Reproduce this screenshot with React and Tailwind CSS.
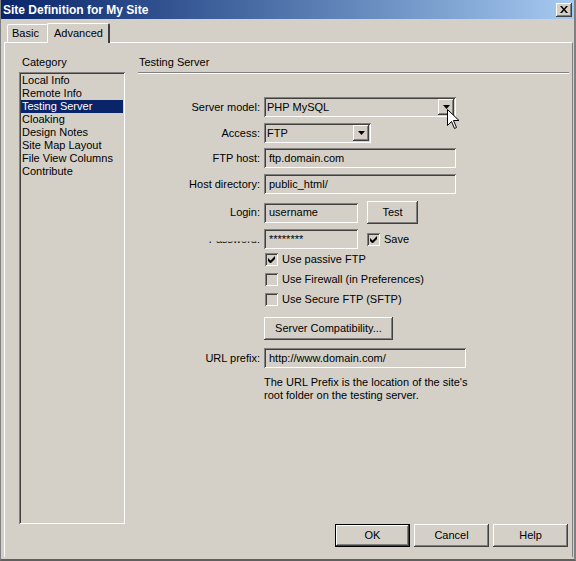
const raised = "shadow-[inset_-1px_-1px_0_#404040,inset_1px_1px_0_#ffffff,inset_-2px_-2px_0_#808080]";
const raisedDefault = "shadow-[inset_0_0_0_1px_#000000,inset_-2px_-2px_0_#404040,inset_2px_2px_0_#ffffff,inset_-3px_-3px_0_#808080]";
const sunken = "shadow-[inset_1px_1px_0_#808080,inset_-1px_-1px_0_#ffffff,inset_2px_2px_0_#404040,inset_-2px_-2px_0_#d4d0c8]";

function Arrow() {
  return (
    <svg width="7" height="4" viewBox="0 0 7 4">
      <path d="M0 0h7L3.5 4z" fill="#000" />
    </svg>
  );
}

function Select({ value, width }) {
  return (
    <div className={`h-[20px] ${width} ${sunken} flex items-center pl-[3px] pr-[2px]`}>
      <span className="flex-1">{value}</span>
      <div className={`w-[16px] h-[16px] ${raised} bg-[#d4d0c8] flex items-center justify-center`}>
        <Arrow />
      </div>
    </div>
  );
}

function Field({ value, width }) {
  return (
    <div className={`h-[20px] ${width} ${sunken} flex items-center pl-[5px]`}>{value}</div>
  );
}

function Check({ checked }) {
  return (
    <div className={`w-[13px] h-[13px] ${sunken} flex items-center justify-center`}>
      {checked && (
        <svg width="7" height="7" viewBox="0 0 7 7">
          <path d="M0 2v3l2 2h1l4-4V0L2.5 4.5z" fill="#000" />
        </svg>
      )}
    </div>
  );
}

function Button({ children, className = "", bevel = raised }) {
  return (
    <div className={`h-[23px] ${bevel} bg-[#d4d0c8] flex items-center justify-center ${className}`}>
      {children}
    </div>
  );
}

function Label({ children }) {
  return <div className="h-[20px] flex items-center justify-end">{children}</div>;
}

const categories = ["Local Info", "Remote Info", "Testing Server", "Cloaking", "Design Notes", "Site Map Layout", "File View Columns", "Contribute"];

export default function App() {
  return (
    <div
      className="relative w-[576px] h-[561px] bg-[#d4d0c8] text-[11px] text-black border-l border-r-2 border-b-2 border-l-[#808080] border-r-[#808080] border-b-[#606060] flex flex-col"
      style={{ fontFamily: '"Liberation Sans", Arial, sans-serif' }}
    >
      {/* title bar */}
      <div className="h-[19px] flex items-center pl-[2px] pr-[2px] bg-gradient-to-r from-[#0a246a] to-[#a6caf0]">
        <span className="flex-1 text-white font-bold text-[12px]">Site Definition for My Site</span>
        <div className={`w-[16px] h-[14px] ${raised} bg-[#d4d0c8] flex items-center justify-center`}>
          <svg width="8" height="7" viewBox="0 0 8 7">
            <path d="M0 0h2l2 2.5L6 0h2L5 3.5 8 7H6L4 4.5 2 7H0l3-3.5z" fill="#000" />
          </svg>
        </div>
      </div>

      {/* tabs */}
      <div className="flex items-end h-[23px] pl-[6px]">
        <div className="h-[18px] w-[41px] border-l border-t border-white border-r border-r-[#404040] rounded-t-[2px] flex items-center pl-[4px]">
          Basic
        </div>
        <div className="h-[20px] w-[63px] -ml-[1px] border-l border-t border-white border-r-2 border-r-[#404040] rounded-t-[2px] flex items-center pl-[6px] pb-[1px] relative top-[1px] bg-[#d4d0c8] z-10">
          Advanced
        </div>
      </div>

      {/* panel */}
      <div className="flex-1 ml-[3px] mr-[1px] mb-[2px] border-l border-t border-white border-r border-r-[#808080] flex flex-col">
        <div className="flex flex-1 pt-[12px]">
          {/* category column */}
          <div className="ml-[14px] w-[106px] flex flex-col">
            <div className="h-[14px] leading-[14px] pl-[3px]">Category</div>
            <div className={`mt-[3px] h-[452px] ${sunken} pt-[2px] px-[2px]`}>
              {categories.map((c) => (
                <div
                  key={c}
                  className={`h-[13px] leading-[13px] pl-[1px] ${c === "Testing Server" ? "bg-[#0a246a] text-white" : ""}`}
                >
                  {c}
                </div>
              ))}
            </div>
          </div>

          {/* form column */}
          <div className="ml-[13px] mr-[3px] flex-1 flex flex-col">
            <div className="h-[14px] leading-[14px] pl-[1px]">Testing Server</div>
            <div className="mt-[3px] h-[2px] border-t border-[#808080] border-b border-b-white" />

            <div className="mt-[23px] grid grid-cols-[122px_1fr] gap-x-[4px] items-center">
              <Label>Server model:</Label>
              <Select value="PHP MySQL" width="w-[192px]" />

              <div className="col-span-2 h-[6px]" />
              <Label>Access:</Label>
              <Select value="FTP" width="w-[107px]" />

              <div className="col-span-2 h-[5px]" />
              <Label>FTP host:</Label>
              <Field value="ftp.domain.com" width="w-[192px]" />

              <div className="col-span-2 h-[6px]" />
              <Label>Host directory:</Label>
              <Field value="public_html/" width="w-[192px]" />

              <div className="col-span-2 h-[7px]" />
              <Label>Login:</Label>
              <div className="flex items-center">
                <Field value="username" width="w-[94px]" />
                <Button className="ml-[9px] w-[51px]">Test</Button>
              </div>

              <div className="col-span-2 h-[5px]" />
              <div className="h-[20px] flex items-center justify-end">
                <span className="h-[13px] leading-[13px] [clip-path:inset(9px_0_0_0)]">Password:</span>
              </div>
              <div className="flex items-center">
                <Field value="********" width="w-[94px]" />
                <div className="ml-[9px] flex items-center gap-[4px]">
                  <Check checked />
                  <span>Save</span>
                </div>
              </div>

              <div className="col-span-2 h-[4px]" />
              <div />
              <div className="flex flex-col gap-[7px] pl-[1px]">
                <div className="flex items-center gap-[4px] h-[13px]">
                  <Check checked />
                  <span>Use passive FTP</span>
                </div>
                <div className="flex items-center gap-[4px] h-[13px]">
                  <Check />
                  <span>Use Firewall (in Preferences)</span>
                </div>
                <div className="flex items-center gap-[4px] h-[13px]">
                  <Check />
                  <span>Use Secure FTP (SFTP)</span>
                </div>
              </div>

              <div className="col-span-2 h-[11px]" />
              <div />
              <Button className="w-[129px] h-[22px]">Server Compatibility...</Button>

              <div className="col-span-2 h-[8px]" />
              <Label>URL prefix:</Label>
              <Field value="http://www.domain.com/" width="w-[202px]" />

              <div className="col-span-2 h-[8px]" />
              <div />
              <div className="leading-[13px]">
                The URL Prefix is the location of the site's
                <br />
                root folder on the testing server.
              </div>
            </div>
          </div>
        </div>

        {/* bottom buttons */}
        <div className="flex justify-end gap-[4px] pr-[4px] mb-[10px]">
          <Button className="w-[75px]" bevel={raisedDefault}>OK</Button>
          <Button className="w-[75px]">Cancel</Button>
          <Button className="w-[75px]">Help</Button>
        </div>
      </div>

      {/* mouse pointer */}
      <svg className="absolute left-[446px] top-[109px]" width="13" height="21" viewBox="0 0 13 21">
        <path d="M0.5 0.5v16l4-4 3 7 2-1-3-7h5.5z" fill="#fff" stroke="#000" strokeWidth="1" />
      </svg>
    </div>
  );
}
